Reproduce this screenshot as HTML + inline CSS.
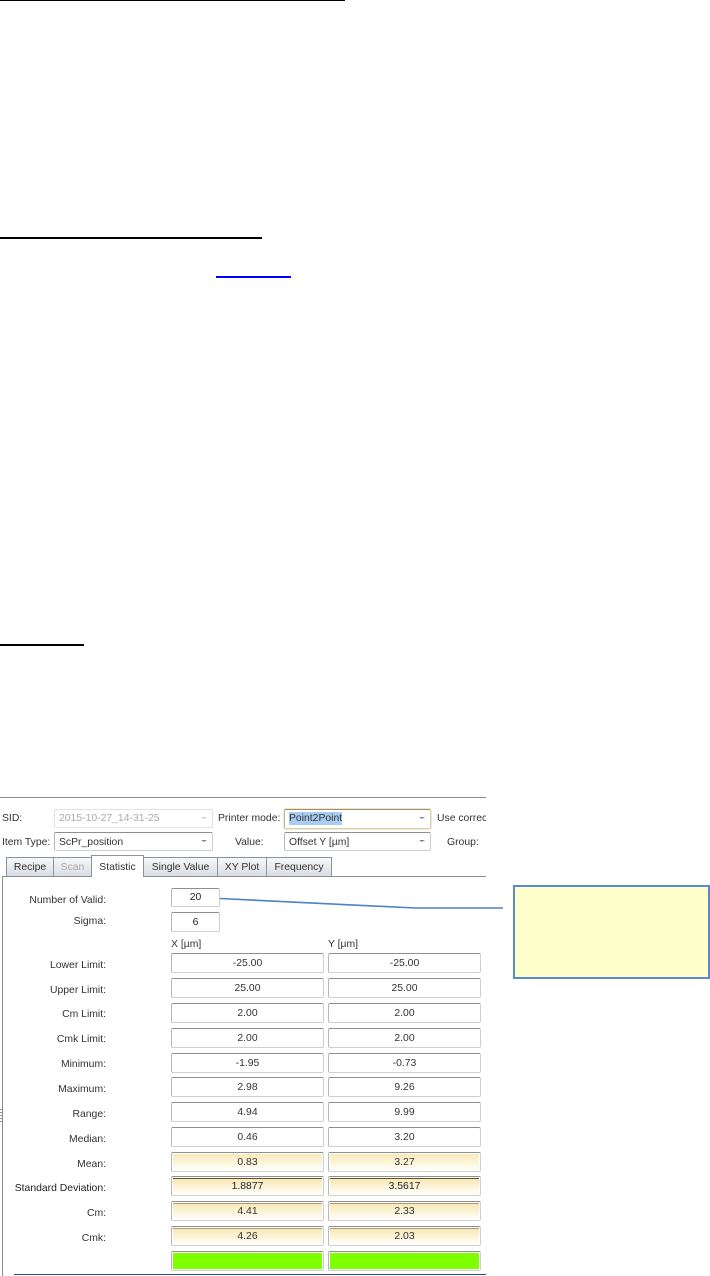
<!DOCTYPE html>
<html>
<head>
<meta charset="utf-8">
<style>
html,body{margin:0;padding:0;background:#fff;}
body{position:relative;width:710px;height:1276px;overflow:hidden;font-family:"Liberation Sans",sans-serif;font-size:10.4px;color:#333;}
.a{position:absolute;box-sizing:border-box;}
.t{position:absolute;white-space:nowrap;line-height:14px;height:14px;}
.r{text-align:right;width:120px;left:-14px;margin-top:2px;}
.f{position:absolute;box-sizing:border-box;height:20px;border:1px solid #cfcfcf;border-top-color:#8f8f8f;border-left-color:#b8b8b8;border-radius:2px;background:#fff;text-align:center;line-height:19px;color:#333;}
.g{background:linear-gradient(#f8e8b4,#fffdf6 90%);background-clip:padding-box;box-shadow:inset 0 0 0 1px #fff;}
.d2{background:linear-gradient(#fff 0,#fff 1px,#5c5038 1px,#5c5038 2px,#f8e8b4 2px,#fffdf6 90%);}
.d3{background:linear-gradient(#fff 0,#fff 1px,#a89c80 1px,#a89c80 2px,#f8e8b4 2px,#fffdf6 90%);}
.k{position:absolute;right:5px;top:7px;width:0;height:0;border-left:3px solid transparent;border-right:3px solid transparent;border-top:2px solid #888;}
.tab{position:absolute;box-sizing:border-box;top:857px;height:19px;border:1px solid #8c939a;border-bottom:0;background:linear-gradient(#f6f7f9,#d9dde3);text-align:center;line-height:20px;color:#333;}
</style>
</head>
<body>
<div class="a" style="left:0;top:0;width:345px;height:1px;background:#000"></div>
<div class="a" style="left:0;top:237px;width:262px;height:2px;background:#000"></div>
<div class="a" style="left:216px;top:276px;width:75px;height:2px;background:#00f"></div>
<div class="a" style="left:0;top:644px;width:84px;height:2px;background:#000"></div>

<div class="a" style="left:0;top:797px;width:486px;height:1px;background:#8c8c8c"></div>

<div class="t" style="left:2px;top:812px">SID:</div>
<div class="f" style="left:54px;top:809px;width:159px;height:19px;text-align:left;padding-left:4px;color:#aaa;border-color:#e2e2e2;line-height:18px">2015-10-27_14-31-25<span class="k" style="border-top-color:#ccc"></span></div>
<div class="t" style="left:218px;top:812px">Printer mode:</div>
<div class="f" style="left:284px;top:809px;width:147px;height:20px;text-align:left;padding-left:4px;box-shadow:0 0 0 1px #fde9ae;line-height:18px"><span style="background:#a8cdf2;padding:1px 0">Point2Point</span><span class="k"></span></div>
<div class="t" style="left:437px;top:812px;width:49px;overflow:hidden">Use correction</div>

<div class="t" style="left:2px;top:836px">Item Type:</div>
<div class="f" style="left:54px;top:832px;width:159px;height:19px;text-align:left;padding-left:4px;line-height:19px">ScPr_position<span class="k"></span></div>
<div class="t" style="left:235px;top:836px">Value:</div>
<div class="f" style="left:284px;top:832px;width:147px;height:19px;text-align:left;padding-left:4px;line-height:19px">Offset Y [µm]<span class="k"></span></div>
<div class="t" style="left:447px;top:836px">Group:</div>

<div class="a" style="left:2px;top:876px;width:484px;height:1px;background:#8c8c8c"></div>
<div class="a" style="left:2px;top:876px;width:1px;height:400px;background:#8c8c8c"></div>
<div class="a" style="left:0;top:1109px;width:2px;height:14px;background:repeating-linear-gradient(#999 0,#999 1px,#fff 1px,#fff 3px)"></div>

<div class="tab" style="left:6px;width:48px">Recipe</div>
<div class="tab" style="left:53px;width:39px;color:#aaa">Scan</div>
<div class="tab" style="left:91px;top:855px;width:53px;height:22px;background:#fff;border-color:#8c939a;line-height:24px;z-index:2">Statistic</div>
<div class="tab" style="left:143px;width:75px">Single Value</div>
<div class="tab" style="left:217px;width:50px">XY Plot</div>
<div class="tab" style="left:266px;width:66px">Frequency</div>

<div class="t r" style="top:892px">Number of Valid:</div>
<div class="f" style="left:171px;top:888px;width:49px;height:19px;line-height:18px;color:#222">20</div>
<div class="t r" style="top:913px">Sigma:</div>
<div class="f" style="left:171px;top:912px;width:49px;height:20px;line-height:20px;color:#222">6</div>
<div class="t" style="left:171px;top:938px">X [µm]</div>
<div class="t" style="left:328px;top:938px">Y [µm]</div>

<svg class="a" style="left:0;top:880px" width="520" height="40"><path d="M220 18.5 L415 28 L503 28" fill="none" stroke="#4f81c8" stroke-width="1.6"/></svg>
<div class="a" style="left:513px;top:885px;width:197px;height:94px;background:#ffffcc;border:2px solid #5a8ad0"></div>

<div class="t r" style="top:957px">Lower Limit:</div>
<div class="f" style="left:171px;top:953px;width:153px">-25.00</div>
<div class="f" style="left:328px;top:953px;width:153px">-25.00</div>

<div class="t r" style="top:982px">Upper Limit:</div>
<div class="f" style="left:171px;top:978px;width:153px">25.00</div>
<div class="f" style="left:328px;top:978px;width:153px">25.00</div>

<div class="t r" style="top:1006px">Cm Limit:</div>
<div class="f" style="left:171px;top:1003px;width:153px">2.00</div>
<div class="f" style="left:328px;top:1003px;width:153px">2.00</div>

<div class="t r" style="top:1031px">Cmk Limit:</div>
<div class="f" style="left:171px;top:1028px;width:153px">2.00</div>
<div class="f" style="left:328px;top:1028px;width:153px">2.00</div>

<div class="t r" style="top:1056px">Minimum:</div>
<div class="f" style="left:171px;top:1053px;width:153px">-1.95</div>
<div class="f" style="left:328px;top:1053px;width:153px">-0.73</div>

<div class="t r" style="top:1081px">Maximum:</div>
<div class="f" style="left:171px;top:1077px;width:153px">2.98</div>
<div class="f" style="left:328px;top:1077px;width:153px">9.26</div>

<div class="t r" style="top:1106px">Range:</div>
<div class="f" style="left:171px;top:1102px;width:153px">4.94</div>
<div class="f" style="left:328px;top:1102px;width:153px">9.99</div>

<div class="t r" style="top:1131px">Median:</div>
<div class="f" style="left:171px;top:1127px;width:153px">0.46</div>
<div class="f" style="left:328px;top:1127px;width:153px">3.20</div>

<div class="t r" style="top:1156px">Mean:</div>
<div class="f g" style="left:171px;top:1152px;width:153px">0.83</div>
<div class="f g" style="left:328px;top:1152px;width:153px">3.27</div>

<div class="t r" style="top:1180px;color:#222">Standard Deviation:</div>
<div class="f g d2" style="left:171px;top:1176px;width:153px;color:#222">1.8877</div>
<div class="f g d2" style="left:328px;top:1176px;width:153px;color:#222">3.5617</div>

<div class="t r" style="top:1205px">Cm:</div>
<div class="f g d3" style="left:171px;top:1201px;width:153px">4.41</div>
<div class="f g d3" style="left:328px;top:1201px;width:153px">2.33</div>

<div class="t r" style="top:1230px">Cmk:</div>
<div class="f g d3" style="left:171px;top:1226px;width:153px">4.26</div>
<div class="f g d3" style="left:328px;top:1226px;width:153px">2.03</div>

<div class="f" style="left:171px;top:1251px;width:153px;background:#7fff00;background-clip:padding-box;box-shadow:inset 0 0 0 1px #fff"></div>
<div class="f" style="left:328px;top:1251px;width:153px;background:#7fff00;background-clip:padding-box;box-shadow:inset 0 0 0 1px #fff"></div>

<div class="a" style="left:14px;top:1274px;width:472px;height:1px;background:#2a4a8a"></div>
</body>
</html>
